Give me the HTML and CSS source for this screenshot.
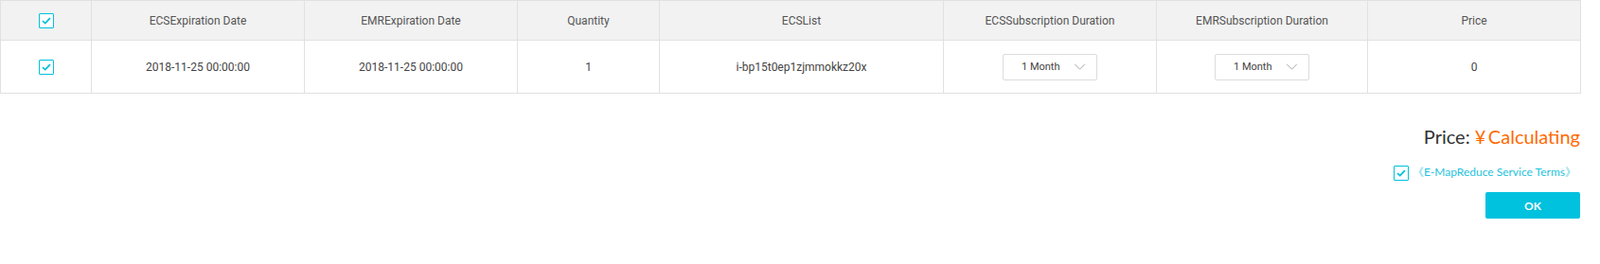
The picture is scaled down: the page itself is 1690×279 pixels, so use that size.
FILE: index.html
```html
<!DOCTYPE html>
<html>
  <head>
    <meta name="viewport" content="width=device-width,initial-scale=1.0">
    <title>Renew</title>
    <link rel="stylesheet" href="styles.css">
  </head>
  <body>
    <div class="wrap">
      <table class="renew-table">
        <colgroup>
          <col style="width:96px">
          <col style="width:225px">
          <col style="width:225px">
          <col style="width:150px">
          <col style="width:300px">
          <col style="width:225px">
          <col style="width:223px">
          <col style="width:225px">
        </colgroup>
        <thead>
          <tr>
            <th><span class="check"><svg viewBox="0 0 16 16"><path d="M3.5 8.2 L6.6 11 L12.5 4.8"/></svg></span></th>
            <th>ECSExpiration Date</th>
            <th>EMRExpiration Date</th>
            <th>Quantity</th>
            <th>ECSList</th>
            <th>ECSSubscription Duration</th>
            <th>EMRSubscription Duration</th>
            <th>Price</th>
          </tr>
        </thead>
        <tbody>
          <tr>
            <td><span class="check"><svg viewBox="0 0 16 16"><path d="M3.5 8.2 L6.6 11 L12.5 4.8"/></svg></span></td>
            <td>2018-11-25 00:00:00</td>
            <td>2018-11-25 00:00:00</td>
            <td>1</td>
            <td>i-bp15t0ep1zjmmokkz20x</td>
            <td>
              <div class="select">
                <span>1 Month</span>
                <svg class="arrow" viewBox="0 0 14 8"><path d="M1 1 L7 7 L13 1"/></svg>
              </div>
            </td>
            <td>
              <div class="select">
                <span>1 Month</span>
                <svg class="arrow" viewBox="0 0 14 8"><path d="M1 1 L7 7 L13 1"/></svg>
              </div>
            </td>
            <td>0</td>
          </tr>
        </tbody>
      </table>

      <div class="footer">
        <div class="total">Price: <span class="amount">&yen;&thinsp;Calculating</span></div>
        <div class="terms">
          <span class="check"><svg viewBox="0 0 16 16"><path d="M3.5 8.2 L6.6 11 L12.5 4.8"/></svg></span>
          <a href="#">《E-MapReduce Service Terms》</a>
        </div>
        <button class="ok-btn">OK</button>
      </div>
    </div>
  </body>
</html>
```

FILE: styles.css
```css
body {
  margin: 0;
  background: #fff;
  font-family: Roboto, "Liberation Sans", sans-serif;
}

.wrap {
  width: 1669px;
}

.renew-table {
  width: 1669px;
  table-layout: fixed;
  border-collapse: collapse;
  font-size: 12px;
  color: #444;
}

.renew-table th,
.renew-table td {
  border: 1px solid #e1e1e1;
  text-align: center;
  padding: 0;
}

.renew-table th {
  height: 41px;
  background: #f2f2f2;
  font-weight: normal;
  color: #555;
}

.renew-table td {
  height: 55px;
}

.check {
  display: inline-block;
  width: 14px;
  height: 14px;
  border: 1px solid #00c1de;
  border-radius: 1px;
  background: #fff;
  vertical-align: middle;
}

.check svg {
  display: block;
  width: 14px;
  height: 14px;
  fill: none;
  stroke: #00c1de;
  stroke-width: 2;
}

.select {
  display: inline-flex;
  align-items: center;
  justify-content: space-between;
  box-sizing: border-box;
  width: 100px;
  height: 28px;
  padding: 0 11px 0 19px;
  border: 1px solid #dcdcdc;
  border-radius: 2px;
  font-size: 11px;
  color: #444;
  vertical-align: middle;
}

.select .arrow {
  width: 13px;
  height: 7px;
  fill: none;
  stroke: #999;
  stroke-width: 1;
}

.footer {
  display: flex;
  flex-direction: column;
  align-items: flex-end;
  padding-top: 31px;
  font-family: Lato, "Open Sans", sans-serif;
}

.total {
  font-size: 20px;
  line-height: 28px;
  color: #333;
}

.amount {
  color: #ff6a00;
}

.terms {
  display: flex;
  align-items: center;
  margin-top: 16px;
  margin-right: 4px;
  font-size: 12px;
}

.terms .check {
  margin-right: 4px;
}

.terms a {
  color: #1fc3dc;
  text-decoration: none;
}

.ok-btn {
  margin-top: 12px;
  width: 100px;
  height: 28px;
  border: none;
  border-radius: 2px;
  background: #00c1de;
  color: #fff;
  font-family: Lato, sans-serif;
  font-size: 12px;
  font-weight: bold;
}
```
